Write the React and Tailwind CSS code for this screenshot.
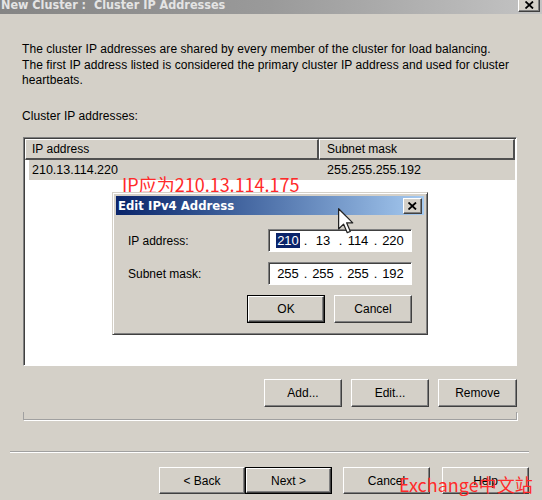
import React from "react";

const SANS = { fontFamily: '"Liberation Sans", Arial, sans-serif' };
const TITLE = { fontFamily: '"DejaVu Sans Condensed", "DejaVu Sans", sans-serif' };

function Btn({ children, w, h = "h-[28px]", def = false }) {
  const inner = (
    <div className="flex-1 flex items-center justify-center border border-t-white border-l-white border-r-[#404040] border-b-[#404040] shadow-[inset_-1px_-1px_0_#808080] text-[12px] text-black" style={SANS}>
      {children}
    </div>
  );
  if (def) {
    return (
      <div className={`flex ${w} ${h} border border-black`}>{inner}</div>
    );
  }
  return <div className={`flex ${w} ${h}`}>{inner}</div>;
}

function CloseBox({ cls }) {
  return (
    <div className={`flex items-center justify-center bg-[#d4d0c8] border border-t-white border-l-white border-r-[#404040] border-b-[#404040] shadow-[inset_-1px_-1px_0_#808080] ${cls}`}>
      <svg width="9" height="8" viewBox="0 0 9 8">
        <path d="M0.5 0.5 L8 7.5 M8 0.5 L0.5 7.5" stroke="#000" strokeWidth="1.8" />
      </svg>
    </div>
  );
}

function IpField({ parts, sel }) {
  return (
    <div className="flex w-[144px] h-[23px] border border-t-[#808080] border-l-[#808080] border-r-white border-b-white shadow-[inset_1px_1px_0_#404040] bg-white items-center pl-[5px] text-[13px] text-black" style={SANS}>
      {parts.map((p, i) => (
        <React.Fragment key={i}>
          <div className="w-[28px] flex justify-center">
            <span className={i === 0 && sel ? "bg-[#0a246a] text-white px-[1px] leading-[15px]" : "leading-[15px]"}>{p}</span>
          </div>
          {i < 3 && <div className="w-[7px] flex justify-center">.</div>}
        </React.Fragment>
      ))}
    </div>
  );
}

export default function App() {
  return (
    <div className="relative w-[542px] h-[500px] bg-[#d4d0c8] overflow-hidden" style={SANS}>
      {/* main title bar */}
      <div className="flex h-[14px] bg-gradient-to-r from-[#858585] via-[#9a9a9a] to-[#c4c4c4] overflow-hidden">
        <div className="flex-1 pl-[1px] text-[12.5px] font-bold leading-[13px] text-[#e4e4e4] -mt-[2px] whitespace-pre" style={TITLE}>
          New Cluster :  Cluster IP Addresses
        </div>
        <CloseBox cls="w-[22px] h-[14px] mr-[2px] -mt-[2px]" />
      </div>

      {/* description */}
      <div className="pl-[22px] pt-[28px] text-[12px] leading-[15.5px] tracking-[0.07px] text-black">
        <p>The cluster IP addresses are shared by every member of the cluster for load balancing.</p>
        <p>The first IP address listed is considered the primary cluster IP address and used for cluster</p>
        <p>heartbeats.</p>
        <p className="mt-[20px]">Cluster IP addresses:</p>
      </div>

      {/* list view */}
      <div className="ml-[23px] mt-[13px] w-[494px] h-[229px] bg-white border border-t-[#808080] border-l-[#808080] border-r-white border-b-white shadow-[inset_1px_1px_0_#404040] p-[1px] flex flex-col">
        <div className="flex h-[21px] text-[12px] text-black">
          <div className="w-[294px] flex items-center pl-[6px] bg-[#d4d0c8] border-t border-l border-t-white border-l-white border-r-2 border-b-2 border-r-[#505050] border-b-[#505050]">IP address</div>
          <div className="flex-1 flex items-center pl-[7px] bg-[#d4d0c8] border-t border-l border-t-white border-l-white border-r-2 border-b-2 border-r-[#505050] border-b-[#505050]">Subnet mask</div>
        </div>
        <div className="flex h-[20px] ml-[4px] bg-[#d4d0c8] text-[12.5px] text-black items-center">
          <div className="w-[290px] pl-[3px]">210.13.114.220</div>
          <div className="flex-1 pl-[8px]">255.255.255.192</div>
        </div>
      </div>

      {/* list buttons */}
      <div className="flex justify-end gap-[9px] w-[517px] mt-[13px]">
        <Btn w="w-[78px]">Add...</Btn>
        <Btn w="w-[78px]">Edit...</Btn>
        <Btn w="w-[79px]">Remove</Btn>
      </div>

      {/* group box bottom */}
      <div className="ml-[23px] mt-[5px] w-[494px] h-[8px] border-l border-r border-b border-l-[#a0a0a0] border-r-[#a0a0a0] border-b-[#a0a0a0] shadow-[1px_1px_0_#ffffff]" />

      {/* separator */}
      <div className="ml-[10px] mt-[31px] w-[519px] h-[2px] border-t border-t-[#a0a0a0] border-b border-b-white" />

      {/* bottom buttons */}
      <div className="flex ml-[159px] mt-[14px]">
        <Btn w="w-[86px]" h="h-[27px]">&lt; Back</Btn>
        <Btn w="w-[87px]" h="h-[27px]" def>Next &gt;</Btn>
        <div className="w-[11px]" />
        <Btn w="w-[87px]" h="h-[27px]">Cancel</Btn>
        <div className="w-[12px]" />
        <Btn w="w-[87px]" h="h-[27px]">Help</Btn>
      </div>

      {/* red annotation */}
      <div className="absolute left-[122px] top-[175px] text-[18px] leading-[18px] text-[#ff2a2a] whitespace-nowrap" style={{ fontFamily: '"Noto Sans CJK SC", "Noto Sans", sans-serif' }}>
        IP应为210.13.114.175
      </div>

      {/* Edit IPv4 dialog */}
      <div className="absolute left-[112px] top-[192px] w-[316px] h-[143px] bg-[#d4d0c8] border border-t-[#d4d0c8] border-l-[#d4d0c8] border-r-[#404040] border-b-[#404040] shadow-[inset_1px_1px_0_#ffffff,inset_-1px_-1px_0_#808080] p-[3px] flex flex-col">
        <div className="flex items-center h-[19px] bg-gradient-to-r from-[#0a246a] to-[#a6caf0] pl-[2px] pr-[2px]">
          <div className="flex-1 text-[13px] font-bold text-white leading-none" style={TITLE}>Edit IPv4 Address</div>
          <CloseBox cls="w-[19px] h-[16px]" />
        </div>
        <div className="flex flex-col pl-[12px] pr-[12px] pt-[14px] text-[12px] text-black">
          <div className="flex items-center justify-between">
            <span>IP address:</span>
            <IpField parts={["210", "13", "114", "220"]} sel />
          </div>
          <div className="flex items-center justify-between mt-[10px]">
            <span>Subnet mask:</span>
            <IpField parts={["255", "255", "255", "192"]} />
          </div>
          <div className="flex justify-end gap-[9px] mt-[10px]">
            <Btn w="w-[78px]" h="h-[28px]" def>OK</Btn>
            <Btn w="w-[78px]" h="h-[28px]">Cancel</Btn>
          </div>
        </div>
      </div>

      {/* mouse cursor */}
      <svg className="absolute left-[338px] top-[208px]" width="16" height="26" viewBox="0 0 13 21">
        <path d="M0.5 0.5 L0.5 17 L4.5 13 L7.5 20 L10 19 L7 12 L12 12 Z" fill="#ffffff" stroke="#222" strokeWidth="1" strokeLinejoin="round" />
      </svg>

      {/* watermark */}
      <div className="absolute left-[399px] top-[475px] text-[18px] leading-[18px] text-[#ff2a2a] whitespace-nowrap" style={{ fontFamily: '"Noto Sans CJK SC", "Noto Sans", sans-serif' }}>
        Exchange中文站
      </div>
    </div>
  );
}
